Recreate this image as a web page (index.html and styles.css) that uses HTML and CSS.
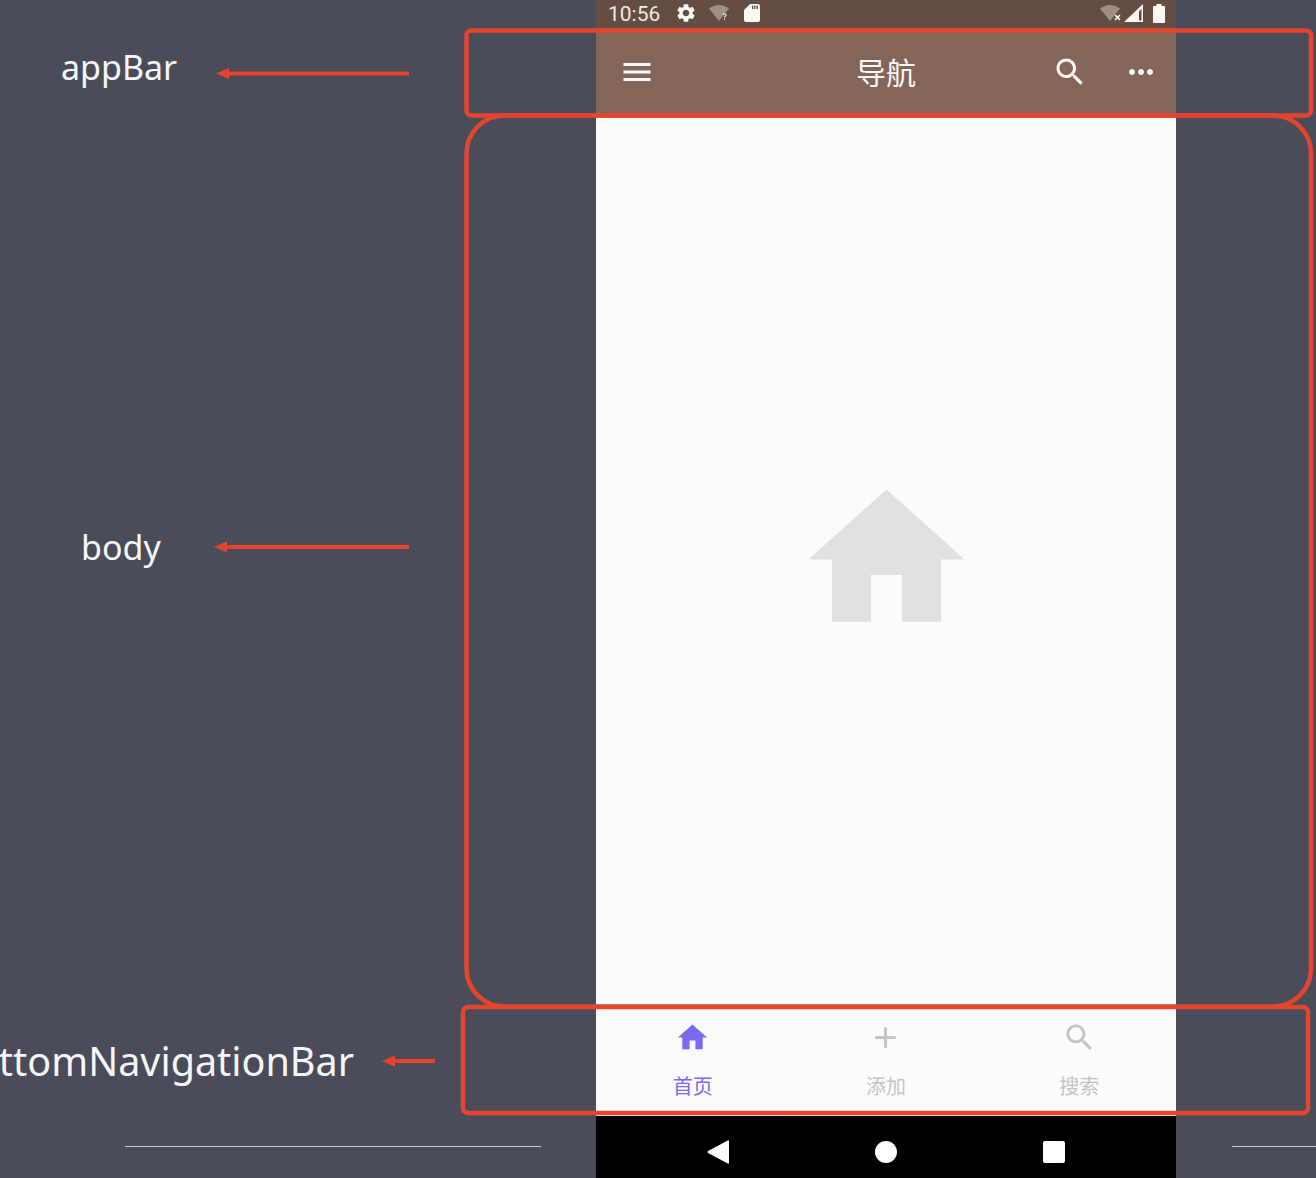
FILE: index.html
```html
<!DOCTYPE html>
<html lang="en">
<head>
  <meta charset="UTF-8">
  <title>Scaffold layout</title>
  <link rel="stylesheet" href="styles.css">
</head>
<body>
<div class="stage">
  <div class="side"></div>

  <div class="phone">
    <div class="status-bar">
      <span class="time">10:56</span>
      <svg class="ic-gear" viewBox="0 0 24 24"><path d="M19.14 12.94c.04-.3.06-.61.06-.94 0-.32-.02-.64-.07-.94l2.03-1.58c.18-.14.23-.41.12-.61l-1.92-3.32c-.12-.22-.37-.29-.59-.22l-2.39.96c-.5-.38-1.03-.7-1.62-.94l-.36-2.54c-.04-.24-.24-.41-.48-.41h-3.84c-.24 0-.43.17-.47.41l-.36 2.54c-.59.24-1.13.57-1.62.94l-2.39-.96c-.22-.08-.47 0-.59.22L2.74 8.87c-.12.21-.08.47.12.61l2.03 1.58c-.05.3-.09.63-.09.94s.02.64.07.94l-2.03 1.58c-.18.14-.23.41-.12.61l1.92 3.32c.12.22.37.29.59.22l2.39-.96c.5.38 1.03.7 1.62.94l.36 2.54c.05.24.24.41.48.41h3.84c.24 0 .44-.17.47-.41l.36-2.54c.59-.24 1.13-.56 1.62-.94l2.39.96c.22.08.47 0 .59-.22l1.92-3.32c.12-.22.07-.47-.12-.61l-2.01-1.58zM12 15.6c-1.98 0-3.6-1.62-3.6-3.6s1.62-3.6 3.6-3.6 3.6 1.62 3.6 3.6-1.62 3.6-3.6 3.6z"/></svg>
      <svg class="ic-wifi" viewBox="0 0 21 17"><path class="dim" d="M0 3.5C3 1.2 6.500 0 10 0s7 1.200 10 3.500L10 16z"/><path d="M13.300 9.800c.3-1 1.200-1.500 2.200-1.500 1.200 0 2.100.7 2.100 1.800 0 1.400-1.500 1.500-1.600 2.700h-1c0-1.700 1.500-1.700 1.500-2.700 0-.5-.4-.9-1-.9-.5 0-.9.3-1.100.9zM15 13.700h1.100v1.200H15z"/></svg>
      <svg class="ic-sd" viewBox="0 0 16 18"><path d="M6 0h8c1.100 0 2 .9 2 2v14c0 1.100-.9 2-2 2H2c-1.100 0-2-.9-2-2V6zM8 1.500v3.500h1.300V1.500zm2.300 0v3.500h1.300V1.500zm2.300 0v3.500h1.300V1.500z"/></svg>
      <span class="status-space"></span>
      <svg class="ic-wifi-x" viewBox="0 0 22 17"><path class="dim" d="M0 3.500C3 1.200 6.500 0 10 0s7 1.200 10 3.500L10 16z"/><path d="M14.500 10.500l1.100-1.100 1.900 1.900 1.900-1.900 1.100 1.100-1.900 1.900 1.900 1.900-1.100 1.100-1.900-1.900-1.900 1.900-1.100-1.100 1.900-1.900z"/></svg>
      <svg class="ic-signal" viewBox="0 0 19 18"><path fill-rule="evenodd" d="M0 18L19 0v18zM15 16.500h2.500V5L15 7.300z"/></svg>
      <svg class="ic-battery" viewBox="0 0 12 19"><path d="M3.500 0h5v2H11c.6 0 1 .4 1 1v15c0 .6-.4 1-1 1H1c-.6 0-1-.4-1-1V3c0-.6.4-1 1-1h2.500z"/></svg>
    </div>

    <div class="app-bar">
      <svg class="bar-icon menu-icon" viewBox="0 0 24 24"><path d="M3 18h18v-2H3v2zm0-5h18v-2H3v2zm0-7v2h18V6H3z"/></svg>
      <div class="app-title">导航</div>
      <div class="bar-actions">
        <svg class="bar-icon" viewBox="0 0 24 24"><path d="M15.500 14h-.79l-.28-.27C15.410 12.590 16 11.110 16 9.500 16 5.910 13.090 3 9.500 3S3 5.910 3 9.500 5.910 16 9.500 16c1.610 0 3.090-.59 4.230-1.570l.27.28v.79l5 4.990L20.490 19l-4.990-5zm-6 0C7.010 14 5 11.990 5 9.500S7.010 5 9.500 5 14 7.010 14 9.500 11.990 14 9.500 14z"/></svg>
        <svg class="bar-icon" viewBox="0 0 24 24"><path d="M6 10c-1.100 0-2 .9-2 2s.9 2 2 2 2-.9 2-2-.9-2-2-2zm12 0c-1.100 0-2 .9-2 2s.9 2 2 2 2-.9 2-2-.9-2-2-2zm-6 0c-1.100 0-2 .9-2 2s.9 2 2 2 2-.9 2-2-.9-2-2-2z"/></svg>
      </div>
    </div>

    <div class="page-body">
      <svg class="big-home" viewBox="0 0 24 24"><path d="M10 20v-6h4v6h5v-8h3L12 3 2 12h3v8z"/></svg>
    </div>

    <div class="bottom-nav">
      <div class="nav-item active">
        <svg class="nav-icon" viewBox="0 0 24 24"><path d="M10 20v-6h4v6h5v-8h3L12 3 2 12h3v8z"/></svg>
        <span class="nav-label">首页</span>
      </div>
      <div class="nav-item">
        <svg class="nav-icon" viewBox="0 0 24 24"><path d="M19 13h-6v6h-2v-6H5v-2h6V5h2v6h6v2z"/></svg>
        <span class="nav-label">添加</span>
      </div>
      <div class="nav-item">
        <svg class="nav-icon" viewBox="0 0 24 24"><path d="M15.500 14h-.79l-.28-.27C15.410 12.590 16 11.110 16 9.500 16 5.910 13.090 3 9.500 3S3 5.910 3 9.500 5.910 16 9.500 16c1.610 0 3.090-.59 4.230-1.570l.27.28v.79l5 4.990L20.490 19l-4.990-5zm-6 0C7.010 14 5 11.990 5 9.500S7.010 5 9.500 5 14 7.010 14 9.500 11.990 14 9.500 14z"/></svg>
        <span class="nav-label">搜索</span>
      </div>
    </div>

    <div class="system-nav">
      <svg class="sys-icon" viewBox="0 0 22 24"><path d="M22 1v22c0 .8-.6 1-1.200.6L1 13c-.8-.5-.8-1.500 0-2L20.800.4C21.400 0 22 .2 22 1z"/></svg>
      <span class="sys-circle"></span>
      <span class="sys-square"></span>
    </div>
  </div>

  <div class="side"></div>
</div>

<!-- annotations drawn over the recording -->
<svg class="marks" viewBox="0 0 1316 1178">
  <line class="rule" x1="125" y1="1146.500" x2="541" y2="1146.500"/>
  <line class="rule" x1="1232" y1="1146.500" x2="1316" y2="1146.500"/>
  <line class="under" x1="790" y1="1115.500" x2="1176" y2="1115.500"/>
  <rect class="box" x="466.500" y="30.500" width="844.500" height="85" rx="5"/>
  <rect class="box" x="466.500" y="115.500" width="844.500" height="891" rx="38"/>
  <rect class="box" x="463" y="1007" width="845" height="106" rx="5"/>
  <path class="arrow-line" d="M224 73.500H409"/>
  <path class="arrow-head" d="M216 73.500l13-5.500v11z"/>
  <path class="arrow-line" d="M222 547H409"/>
  <path class="arrow-head" d="M214 547l13-5.500v11z"/>
  <path class="arrow-line" d="M390 1061H435"/>
  <path class="arrow-head" d="M382 1061l13-5.500v11z"/>
</svg>
<div class="label label-app">appBar</div>
<div class="label label-body">body</div>
<div class="label label-nav">bottomNavigationBar</div>
</body>
</html>
```

FILE: styles.css
```css
* {
  box-sizing: border-box;
}

html, body {
  margin: 0;
  padding: 0;
  height: 100%;
}

body {
  position: relative;
  overflow: hidden;
  background: #4a4d59;
  font-family: 'Noto Sans', 'Noto Sans CJK SC', sans-serif;
}

svg {
  display: block;
  fill: currentColor;
}

.stage {
  display: flex;
  height: 1178px;
}

.side {
  flex: 1;
}

.stage .side:first-child {
  flex: 0 0 596px;
}

.phone {
  display: flex;
  flex-direction: column;
  flex: 0 0 580px;
}

/* status bar */
.status-bar {
  display: flex;
  align-items: center;
  height: 28px;
  padding: 0 11px 2px 12px;
  background: #644d42;
  color: #fbf8f6;
}

.time {
  width: 52px;
  padding-top: 2px;
  font-family: 'Roboto', sans-serif;
  font-size: 21px;
  line-height: 26px;
  color: #efe9e5;
}

.ic-gear {
  width: 22px;
  height: 22px;
  margin-left: 15px;
}

.ic-wifi {
  width: 21px;
  height: 17px;
  margin-left: 12px;
}

.ic-sd {
  width: 16px;
  height: 18px;
  margin-left: 14px;
}

.status-space {
  flex: 1;
}

.ic-wifi-x {
  width: 22px;
  height: 17px;
}

.ic-signal {
  width: 19px;
  height: 18px;
  margin-left: 2px;
}

.ic-battery {
  width: 12px;
  height: 19px;
  margin-left: 10px;
}

.dim {
  fill: #a08f87;
}

/* app bar */
.app-bar {
  display: grid;
  grid-template-columns: 1fr auto 1fr;
  align-items: center;
  height: 88px;
  padding: 0 20px;
  background: #84655a;
  color: #fbf8f6;
}

.bar-icon {
  width: 36px;
  height: 36px;
}

.menu-icon {
  margin-left: 3px;
}

.app-title {
  font-size: 30px;
  font-weight: 400;
  line-height: 40px;
  padding-top: 2px;
}

.bar-actions {
  display: flex;
  justify-content: flex-end;
  gap: 35px;
  margin-right: -3px;
}

/* body */
.page-body {
  display: flex;
  align-items: center;
  justify-content: center;
  flex: 1;
  padding-bottom: 5px;
  background: #fcfbfc;
}

.big-home {
  width: 187px;
  height: 187px;
  color: #e0e0e0;
}

/* bottom navigation */
.bottom-nav {
  display: flex;
  height: 108px;
  background: #fcfbfc;
}

.nav-item {
  display: flex;
  flex-direction: column;
  align-items: center;
  flex: 1;
  padding-top: 12px;
  color: #c4c4c4;
}

.nav-item.active {
  color: #7a6af0;
}

.nav-icon {
  width: 35px;
  height: 35px;
}

.nav-label {
  margin-top: 17px;
  font-size: 20px;
  line-height: 30px;
}

/* android buttons */
.system-nav {
  display: flex;
  align-items: center;
  justify-content: center;
  gap: 146px;
  height: 62px;
  padding: 10px 1px 0 0;
  background: #000;
  color: #fff;
}

.sys-icon {
  width: 22px;
  height: 24px;
}

.sys-circle {
  width: 22px;
  height: 22px;
  border-radius: 50%;
  background: #fff;
}

.sys-square {
  width: 22px;
  height: 22px;
  border-radius: 2px;
  background: #fff;
}

/* annotations */
.marks {
  position: absolute;
  top: 0;
  left: 0;
  width: 1316px;
  height: 1178px;
  fill: none;
}

.box {
  fill: none;
  stroke: #e4452f;
  stroke-width: 4.5;
}

.arrow-line {
  fill: none;
  stroke: #e4452f;
  stroke-width: 4;
}

.arrow-head {
  fill: #e4452f;
}

.rule {
  stroke: #c9cad0;
  stroke-width: 1;
}

.under {
  stroke: #fbf8f6;
  stroke-width: 1;
}

.label {
  position: absolute;
  font-size: 34px;
  line-height: 44px;
  color: #f6f6f8;
  white-space: nowrap;
}

.label-app {
  top: 45px;
  left: 61px;
}

.label-body {
  top: 525px;
  left: 81px;
}

.label-nav {
  top: 1039px;
  right: 962px;
  font-size: 39.500px;
}
```
